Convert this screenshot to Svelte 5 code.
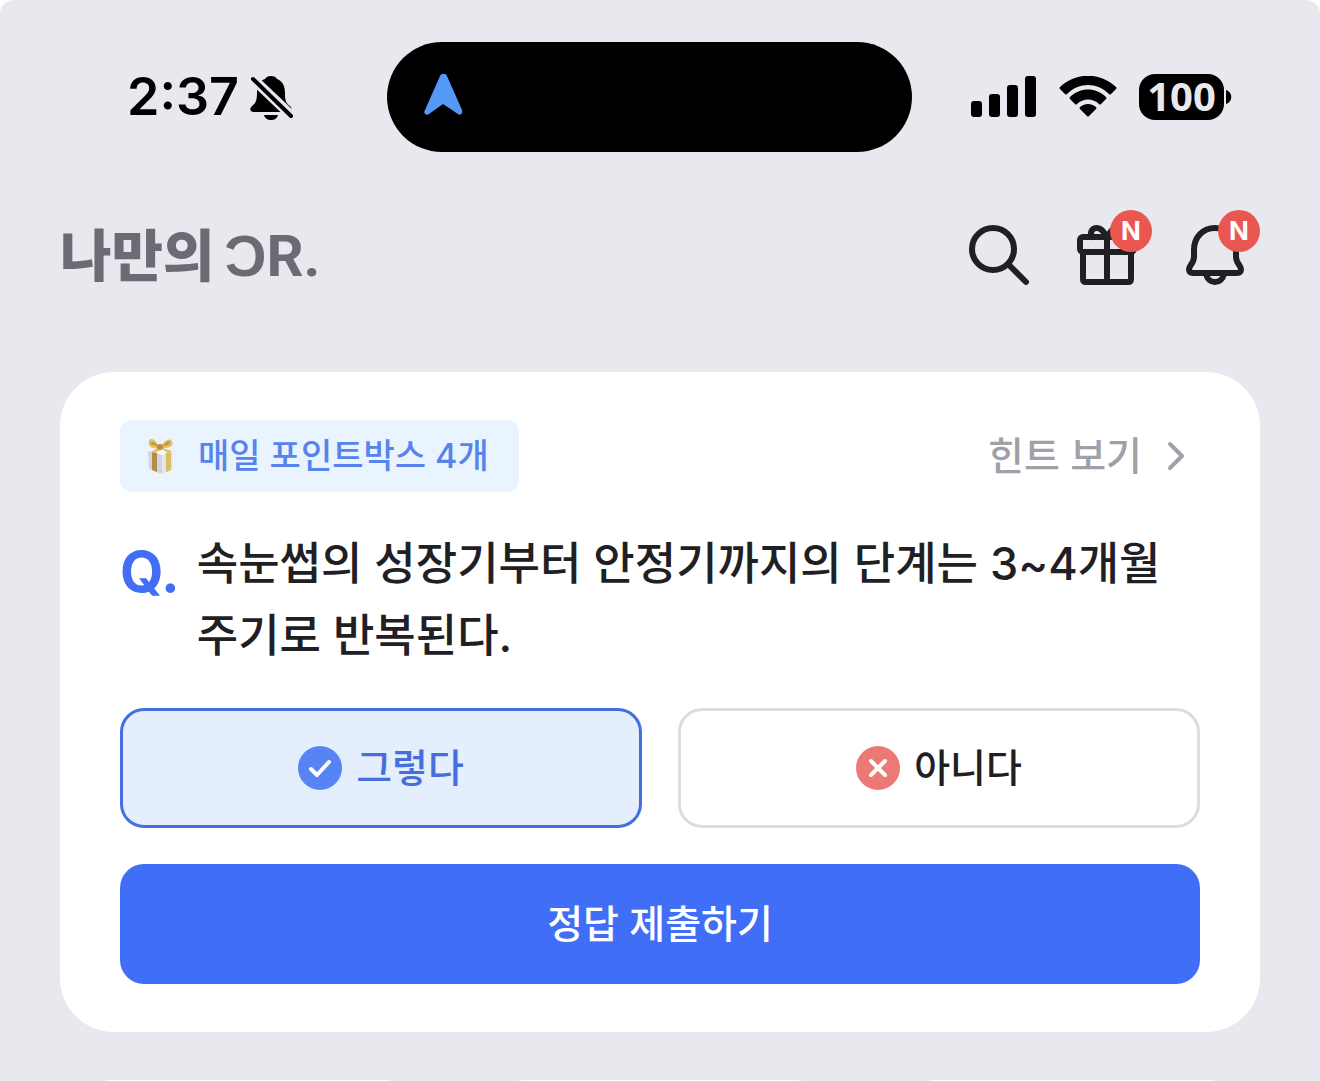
<script lang="ts">
  type Answer = 'yes' | 'no';

  const question = '속눈썹의 성장기부터 안정기까지의 단계는 3~4개월 주기로 반복된다.';
  const options: { id: Answer; label: string }[] = [
    { id: 'yes', label: '그렇다' },
    { id: 'no', label: '아니다' }
  ];
  const nextCards = [0, 1, 2];

  let answer = $state<Answer>('yes');
</script>

<div class="page">
  <div class="status">
    <div class="clock">
      <span>2:37</span>
      <svg width="44" height="48" viewBox="0 0 44 48" aria-hidden="true">
        <path
          d="M21 3c3 0 5 1 6 3 6 2 8 8 8 14 0 8 1 10 5 13 3 3 2 6-1 6H4c-4 0-5-3-2-6 4-3 5-6 5-13C7 12 9 8 15 6c1-2 3-3 6-3Z"
        />
        <path d="M14 42h14c-1 4-4 5-7 5s-6-1-7-5Z" />
        <path d="M1 4 44 45" stroke="#e8e9ef" stroke-width="10" />
        <path d="M3 6 41 43" stroke="#000" stroke-width="4" stroke-linecap="round" />
      </svg>
    </div>
    <div class="island">
      <svg width="40" height="44" viewBox="0 0 40 44" aria-hidden="true">
        <path
          d="M17 3c1-3 6-3 7 0l15 34c1 3-1 6-4 4L20 31 6 41c-3 2-6-1-4-4Z"
          fill="#5599f8"
        />
      </svg>
    </div>
    <div class="signals">
      <svg width="66" height="42" viewBox="0 0 66 42" aria-hidden="true">
        <rect x="0" y="25" width="11" height="16" rx="3" />
        <rect x="18" y="18" width="11" height="23" rx="3" />
        <rect x="36" y="9" width="11" height="32" rx="3" />
        <rect x="54" y="0" width="11" height="41" rx="3" />
      </svg>
      <svg width="58" height="42" viewBox="0 0 58 42" aria-hidden="true">
        <path d="M1 11C17-4 41-4 57 11q1 1 0 2l-5 5q-1 1-2 0C38 6 20 6 8 18q-1 1-2 0l-5-5q-1-1 0-2Z" />
        <path d="M11 21c10-10 26-10 36 0q1 1 0 2l-5 5q-1 1-2 0c-6-6-16-6-22 0q-1 1-2 0l-5-5q-1-1 0-2Z" />
        <path d="M21 31c5-4 11-4 16 0q1 1 0 2l-7 7q-1 1-2 0l-7-7q-1-1 0-2Z" />
      </svg>
      <div class="battery">
        <span class="level">100</span>
        <svg width="6" height="16" viewBox="0 0 6 16" aria-hidden="true">
          <path d="M0 1c7 2 7 12 0 14Z" />
        </svg>
      </div>
    </div>
  </div>

  <header>
    <h1>나만의<span class="dr">ƆR.</span></h1>
    <nav>
      <button type="button" class="icon" aria-label="검색">
        <svg class="line" viewBox="0 0 72 72" aria-hidden="true">
          <circle cx="30" cy="30" r="21" />
          <path d="m46 46 17 17" />
        </svg>
      </button>
      <button type="button" class="icon" aria-label="선물">
        <svg class="line" viewBox="0 0 72 72" aria-hidden="true">
          <rect x="9" y="18" width="54" height="15" rx="3" />
          <path d="M12 33v27q0 3 3 3h42q3 0 3-3V33M36 18v45" />
          <path d="M36 18c-3-4-5-9-10-9-6 0-7 5-5 9M36 18c3-4 5-9 10-9 6 0 7 5 5 9" />
        </svg>
        <span class="badge">N</span>
      </button>
      <button type="button" class="icon" aria-label="알림">
        <svg class="line" viewBox="0 0 72 72" aria-hidden="true">
          <path
            d="M36 9c-12 0-21 9-21 22v7c0 6-5 9-5 12q0 4 4 4h44q4 0 4-4c0-3-5-6-5-12v-7C57 18 48 9 36 9Z"
          />
          <path d="M27 55c1 5 5 8 9 8s8-3 9-8" />
        </svg>
        <span class="badge">N</span>
      </button>
    </nav>
  </header>

  <main class="quiz">
    <div class="top">
      <span class="tag">
        <svg width="30" height="36" viewBox="0 0 30 36" aria-hidden="true">
          <path d="M2 13 16 16v20L3 31Z" fill="#d3d4e2" />
          <path d="M16 16 27 13v18l-11 5Z" fill="#e6e4ec" />
          <path d="m1 12 13-3 14 3-12 5Z" fill="#f7f6fa" />
          <path d="m6 14 5 1v19l-5-2Z" fill="#b08e45" />
          <path d="m20 15 5-1v18l-5 2Z" fill="#d9bd62" />
          <path
            d="M14 10C10 1 4-1 3 3s0 8 11 7C17 3 24-1 26 3s-1 8-12 7ZM13 9l-8 5 4 1 7-4 6 4 4-2Z"
            fill="#e2c060"
          />
          <path d="M12 8C9 4 6 3 5 5s3 3 7 3ZM17 8c2-4 6-6 7-4s-3 4-7 4Z" fill="#c59a46" />
          <circle cx="14" cy="9" r="3" fill="#b98e3c" />
        </svg>
        매일 포인트박스 4개
      </span>
      <a class="hint" href="#hint">
        힌트 보기
        <svg width="20" height="30" viewBox="0 0 20 30" aria-hidden="true">
          <path d="m4 3 12 12L4 27" />
        </svg>
      </a>
    </div>

    <div class="question">
      <span class="q">Q.</span>
      <p>{question}</p>
    </div>

    <div class="options">
      {#each options as option (option.id)}
        <button
          type="button"
          class="option"
          class:selected={answer === option.id}
          aria-pressed={answer === option.id}
          onclick={() => (answer = option.id)}
        >
          <svg class="mark" viewBox="0 0 44 44" aria-hidden="true">
            {#if option.id === 'yes'}
              <circle cx="22" cy="22" r="22" fill="#5684f4" />
              <path d="m13 23 6 6 12-13" />
            {:else}
              <circle cx="22" cy="22" r="22" fill="#ed7975" />
              <path d="m15 15 14 14M29 15 15 29" />
            {/if}
          </svg>
          {option.label}
        </button>
      {/each}
    </div>

    <button type="button" class="submit">정답 제출하기</button>
  </main>

  <div class="next">
    {#each nextCards as card (card)}
      <div class="next-card"></div>
    {/each}
  </div>
</div>

<style>
  :global(body) {
    margin: 0;
    background: #fff;
  }

  .page {
    display: flex;
    flex-direction: column;
    height: 100vh;
    overflow: hidden;
    background: #e8e9ef;
    border-radius: 14px 14px 0 0;
    color: #1f2024;
    font-family: Inter, 'Noto Sans CJK KR', sans-serif;
    font-size: 39px;
    font-weight: 500;
  }

  .page > * {
    flex-shrink: 0;
  }

  svg {
    display: block;
    flex: none;
  }

  button {
    font: inherit;
    color: inherit;
    line-height: 60px;
    cursor: pointer;
  }

  .status {
    display: grid;
    grid-template-columns: 260fr 525fr 320fr;
    align-items: center;
    padding: 42px 88px 0 127px;
    color: #000;
  }

  .clock,
  .signals,
  .battery {
    display: flex;
    align-items: center;
  }

  .clock {
    gap: 11px;
    font-size: 52px;
    font-weight: 600;
    line-height: 60px;
  }

  .island {
    display: flex;
    align-items: center;
    box-sizing: border-box;
    height: 110px;
    padding: 0 36px 4px;
    border-radius: 60px;
    background: #000;
  }

  .signals {
    justify-content: flex-end;
    gap: 22px;
  }

  .battery {
    gap: 2px;
  }

  .level {
    width: 85px;
    padding-bottom: 2px;
    border-radius: 16px;
    background: #000;
    color: #e8e9ef;
    font-family: 'Open Sans', sans-serif;
    font-size: 40px;
    font-weight: 700;
    line-height: 44px;
    text-align: center;
  }

  header {
    display: flex;
    align-items: center;
    justify-content: space-between;
    margin: 67px 69px 81px 60px;
  }

  h1 {
    display: flex;
    align-items: baseline;
    gap: 10px;
    margin: 0;
    padding-bottom: 6px;
    color: #6b6c73;
    font-family: 'Noto Sans CJK KR', sans-serif;
    font-size: 56px;
    font-weight: 900;
    line-height: 66px;
  }

  .dr {
    font-family: Roboto, sans-serif;
    font-size: 58px;
    font-weight: 700;
    line-height: 48px;
  }

  nav {
    display: flex;
    gap: 36px;
  }

  .icon {
    position: relative;
    width: 72px;
    height: 72px;
    padding: 0;
    border: none;
    background: none;
  }

  .line {
    fill: none;
    stroke: #1f2024;
    stroke-width: 6;
    stroke-linecap: round;
    stroke-linejoin: round;
  }

  .badge {
    position: absolute;
    top: -9px;
    right: -9px;
    width: 42px;
    border-radius: 50%;
    background: #ea5650;
    color: #fff;
    font-size: 26px;
    font-weight: 700;
    line-height: 42px;
    text-align: center;
  }

  .quiz {
    display: flex;
    flex-direction: column;
    gap: 36px;
    margin: 0 60px 48px;
    padding: 48px 60px;
    border-radius: 54px;
    background: #fff;
  }

  .top {
    display: flex;
    align-items: center;
    justify-content: space-between;
  }

  .tag {
    display: flex;
    align-items: center;
    gap: 22px;
    padding: 0 30px 0 26px;
    border-radius: 12px;
    background: #eaf4ff;
    color: #5684ec;
    font-size: 34px;
    line-height: 72px;
  }

  .hint {
    display: flex;
    align-items: center;
    gap: 24px;
    padding-right: 14px;
    color: #a0a1a8;
    line-height: 72px;
    text-decoration: none;
  }

  .hint path {
    fill: none;
    stroke: #a0a1a8;
    stroke-width: 4;
    stroke-linecap: round;
    stroke-linejoin: round;
  }

  .question {
    display: flex;
    gap: 17px;
    font-size: 45px;
    line-height: 72px;
  }

  .question p {
    margin: 0;
    word-break: keep-all;
  }

  .q {
    padding-top: 8px;
    color: #416ef5;
    font-size: 56px;
    font-weight: 700;
  }

  .options {
    display: grid;
    grid-template-columns: 1fr 1fr;
    gap: 36px;
  }

  .option {
    display: flex;
    align-items: center;
    justify-content: center;
    gap: 14px;
    height: 120px;
    border: 3px solid #dcdde1;
    border-radius: 24px;
    background: #fff;
  }

  .option.selected {
    border-color: #456fdc;
    background: #e4eefd;
    color: #456fdc;
  }

  .mark {
    width: 44px;
    height: 44px;
  }

  .mark path {
    fill: none;
    stroke: #fff;
    stroke-width: 4;
    stroke-linecap: round;
    stroke-linejoin: round;
  }

  .submit {
    height: 120px;
    border: none;
    border-radius: 24px;
    background: #416ef7;
    color: #fff;
  }

  .next {
    display: grid;
    grid-template-columns: repeat(3, 1fr);
    gap: 36px;
    margin: 0 60px;
  }

  .next-card {
    height: 240px;
    border-radius: 54px;
    background: #fff;
  }
</style>
